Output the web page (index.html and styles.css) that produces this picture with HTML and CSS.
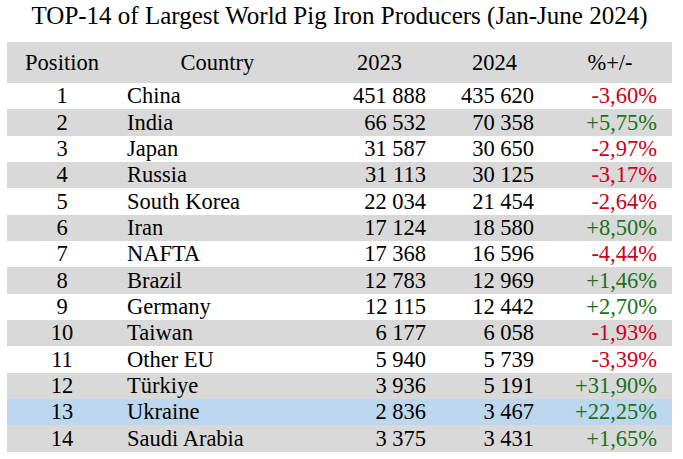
FILE: index.html
```html
<!DOCTYPE html>
<html>
<head>
<meta charset="utf-8">
<link rel="stylesheet" href="styles.css">
</head>
<body>
<h1 class="title">TOP-14 of Largest World Pig Iron Producers (Jan-June 2024)</h1>
<table class="data">
  <colgroup>
    <col class="c-pos"><col class="c-country"><col class="c-y1"><col class="c-y2"><col class="c-ch">
  </colgroup>
  <thead>
    <tr class="head">
      <th>Position</th><th>Country</th><th>2023</th><th>2024</th><th>%+/-</th>
    </tr>
  </thead>
  <tbody>
    <tr class="odd"><td class="pos">1</td><td class="country">China</td><td class="num n1">451 888</td><td class="num n2">435 620</td><td class="num ch neg">-3,60%</td></tr>
    <tr class="even"><td class="pos">2</td><td class="country">India</td><td class="num n1">66 532</td><td class="num n2">70 358</td><td class="num ch pos-ch">+5,75%</td></tr>
    <tr class="odd"><td class="pos">3</td><td class="country">Japan</td><td class="num n1">31 587</td><td class="num n2">30 650</td><td class="num ch neg">-2,97%</td></tr>
    <tr class="even"><td class="pos">4</td><td class="country">Russia</td><td class="num n1">31 113</td><td class="num n2">30 125</td><td class="num ch neg">-3,17%</td></tr>
    <tr class="odd"><td class="pos">5</td><td class="country">South Korea</td><td class="num n1">22 034</td><td class="num n2">21 454</td><td class="num ch neg">-2,64%</td></tr>
    <tr class="even"><td class="pos">6</td><td class="country">Iran</td><td class="num n1">17 124</td><td class="num n2">18 580</td><td class="num ch pos-ch">+8,50%</td></tr>
    <tr class="odd"><td class="pos">7</td><td class="country">NAFTA</td><td class="num n1">17 368</td><td class="num n2">16 596</td><td class="num ch neg">-4,44%</td></tr>
    <tr class="even"><td class="pos">8</td><td class="country">Brazil</td><td class="num n1">12 783</td><td class="num n2">12 969</td><td class="num ch pos-ch">+1,46%</td></tr>
    <tr class="odd"><td class="pos">9</td><td class="country">Germany</td><td class="num n1">12 115</td><td class="num n2">12 442</td><td class="num ch pos-ch">+2,70%</td></tr>
    <tr class="even"><td class="pos">10</td><td class="country">Taiwan</td><td class="num n1">6 177</td><td class="num n2">6 058</td><td class="num ch neg">-1,93%</td></tr>
    <tr class="odd"><td class="pos">11</td><td class="country">Other EU</td><td class="num n1">5 940</td><td class="num n2">5 739</td><td class="num ch neg">-3,39%</td></tr>
    <tr class="even"><td class="pos">12</td><td class="country">Türkiye</td><td class="num n1">3 936</td><td class="num n2">5 191</td><td class="num ch pos-ch">+31,90%</td></tr>
    <tr class="hl"><td class="pos">13</td><td class="country">Ukraine</td><td class="num n1">2 836</td><td class="num n2">3 467</td><td class="num ch pos-ch">+22,25%</td></tr>
    <tr class="even"><td class="pos">14</td><td class="country">Saudi Arabia</td><td class="num n1">3 375</td><td class="num n2">3 431</td><td class="num ch pos-ch">+1,65%</td></tr>
  </tbody>
</table>
</body>
</html>
```

FILE: styles.css
```css
html, body {
  margin: 0;
  padding: 0;
  background: #ffffff;
}
body {
  padding: 0 11px 0 7px;
  font-family: "Liberation Serif", serif;
  color: #000000;
}
.title {
  margin: 0;
  height: 42px;
  line-height: 31px;
  font-family: "Liberation Serif", serif;
  font-size: 25px;
  font-weight: normal;
  text-align: center;
}
.data {
  width: 665px;
  border-collapse: collapse;
  table-layout: fixed;
  font-family: "Liberation Serif", serif;
  font-size: 22.5px;
}
.c-pos { width: 110px; }
.c-country { width: 201px; }
.c-y1 { width: 123px; }
.c-y2 { width: 107px; }
.c-ch { width: 124px; }
.data th, .data td {
  padding: 0;
  white-space: nowrap;
}
.head th {
  height: 41px;
  font-weight: normal;
  text-align: center;
  background: #d9d9d9;
  vertical-align: middle;
}
.data tbody td {
  height: 26.35px;
  line-height: 24px;
  vertical-align: middle;
}
.odd { background: #ffffff; }
.even { background: #d9d9d9; }
.hl { background: #bdd7ee; }
.pos { text-align: center; }
.country { padding-left: 10px !important; }
.num { text-align: right; }
.n1 { padding-right: 15px !important; }
.n2 { padding-right: 14px !important; }
.ch { padding-right: 15px !important; }
.neg { color: #cc0018; }
.pos-ch { color: #1a721a; }
```
